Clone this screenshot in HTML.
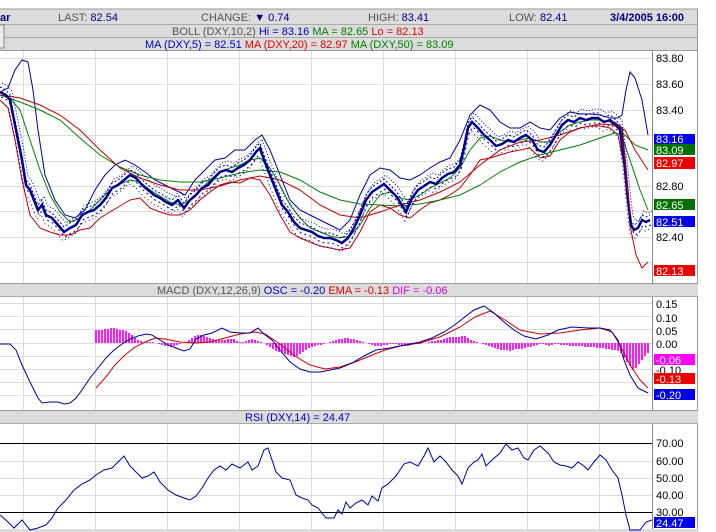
<!DOCTYPE html>
<html><head><meta charset="utf-8"><style>
html,body{margin:0;padding:0;background:#fff;width:716px;height:532px;overflow:hidden;font-family:"Liberation Sans",sans-serif}
svg text{font-family:"Liberation Sans",sans-serif;font-size:11px}
</style></head><body>
<svg width="716" height="532" viewBox="0 0 716 532" xmlns="http://www.w3.org/2000/svg">
<defs>
<path id="pr" d="M0 92 L6 95 L10 100 L14 120 L18 140 L22 160 L26 185 L30 190 L34 200 L38 210 L42 205 L46 215 L52 218 L58 225 L64 232 L70 228 L76 225 L82 215 L88 212 L94 210 L100 205 L106 198 L112 188 L118 185 L124 180 L130 175 L136 178 L142 185 L148 190 L154 195 L160 198 L166 202 L172 205 L178 200 L184 208 L190 200 L196 195 L202 188 L208 185 L214 178 L220 172 L226 170 L232 172 L238 168 L244 165 L250 160 L256 152 L260 148 L264 160 L270 175 L276 190 L282 205 L288 212 L294 222 L300 228 L306 230 L312 232 L318 236 L324 238 L330 238 L336 240 L342 243 L348 238 L354 228 L360 215 L366 200 L372 192 L378 188 L384 184 L390 190 L396 196 L402 205 L406 212 L412 198 L418 190 L424 186 L430 182 L436 184 L442 178 L448 174 L454 172 L460 165 L464 148 L468 128 L472 122 L478 128 L484 135 L490 140 L496 146 L502 144 L508 140 L514 142 L520 138 L526 135 L532 140 L538 150 L544 152 L550 145 L556 135 L562 125 L568 120 L574 122 L580 118 L586 120 L592 118 L598 118 L604 122 L610 120 L616 125 L620 130 L624 160 L628 200 L631 225 L634 230 L638 228 L642 220 L646 222 L650 220"/>
</defs>
<rect width="716" height="532" fill="#fff"/>
<rect x="0" y="9" width="698" height="15" fill="#dcdcdc"/>
<rect x="0" y="24" width="698" height="13" fill="#dcdcdc"/>
<rect x="0" y="37.5" width="698" height="13" fill="#dcdcdc"/>
<line x1="0" y1="9" x2="698" y2="9" fill="none" stroke="#999"/>
<line x1="0" y1="24.5" x2="698" y2="24.5" stroke="#aaa"/>
<line x1="0" y1="37.5" x2="698" y2="37.5" stroke="#aaa"/>
<line x1="0" y1="50.5" x2="698" y2="50.5" stroke="#999"/>
<rect x="-2" y="25" width="6" height="23" fill="#ececec" stroke="#888"/>
<text x="0" y="21" fill="#000080" font-weight="bold" font-size="12">ar</text>
<text x="58" y="21" fill="#555">LAST: <tspan fill="#000080">82.54</tspan></text>
<text x="201" y="21" fill="#555">CHANGE: <tspan fill="#000080">▼ 0.74</tspan></text>
<text x="368" y="21" fill="#555">HIGH: <tspan fill="#000080">83.41</tspan></text>
<text x="509" y="21" fill="#555">LOW: <tspan fill="#000080">82.41</tspan></text>
<text x="610" y="21" fill="#000080" font-weight="bold" font-size="12">3/4/2005 16:00</text>
<text x="172" y="35" fill="#555" font-size="10.5">BOLL (DXY,10,2) <tspan fill="#0000c0">Hi = 83.16</tspan> <tspan fill="#008000">MA = 82.65</tspan> <tspan fill="#e00000">Lo = 82.13</tspan></text>
<text x="145" y="48" fill="#0000c0" font-size="10.5">MA (DXY,5) = 82.51 <tspan fill="#e00000">MA (DXY,20) = 82.97</tspan> <tspan fill="#008000">MA (DXY,50) = 83.09</tspan></text>
<line x1="697.5" y1="9" x2="697.5" y2="532" stroke="#999"/>
<line x1="652.5" y1="51" x2="652.5" y2="283" stroke="#888"/>
<line x1="652.5" y1="296" x2="652.5" y2="410" stroke="#888"/>
<line x1="652.5" y1="423" x2="652.5" y2="530" stroke="#888"/>
<g stroke="#dcdcdc" stroke-width="1">
<path d="M23.5 51V283M95.5 51V283M167.5 51V283M239.5 51V283M311.5 51V283M383.5 51V283M455.5 51V283M527.5 51V283M599.5 51V283"/>
<path d="M23.5 296V410M95.5 296V410M167.5 296V410M239.5 296V410M311.5 296V410M383.5 296V410M455.5 296V410M527.5 296V410M599.5 296V410"/>
<path d="M23.5 423V530M95.5 423V530M167.5 423V530M239.5 423V530M311.5 423V530M383.5 423V530M455.5 423V530M527.5 423V530M599.5 423V530"/>
<path d="M0 58.5H652M0 84.5H652M0 110.5H652M0 135.5H652M0 161.5H652M0 186.5H652M0 211.5H652M0 237.5H652M0 262.5H652"/>
<path d="M0 303.5H652M0 316.5H652M0 329.5H652M0 343.5H652M0 356.5H652M0 369.5H652M0 382.5H652M0 395.5H652"/>
<path d="M0 461.5H652M0 478.5H652M0 495.5H652"/>
</g>
<rect x="0" y="283" width="698" height="13" fill="#dcdcdc"/>
<line x1="0" y1="283.5" x2="698" y2="283.5" stroke="#999"/>
<line x1="0" y1="296.5" x2="698" y2="296.5" stroke="#aaa"/>
<rect x="0" y="410" width="698" height="13" fill="#dcdcdc"/>
<line x1="0" y1="410.5" x2="698" y2="410.5" stroke="#999"/>
<line x1="0" y1="423.5" x2="698" y2="423.5" stroke="#aaa"/>
<rect x="0" y="529" width="698" height="3" fill="#dcdcdc"/>
<text x="157" y="294" fill="#555" font-size="10.5">MACD (DXY,12,26,9) <tspan fill="#0000c0">OSC = -0.20</tspan> <tspan fill="#e00000">EMA = -0.13</tspan> <tspan fill="#e000e0">DIF = -0.06</tspan></text>
<text x="245" y="421" fill="#0000c0" font-size="10.5">RSI (DXY,14) = 24.47</text>
<g fill="#000" font-size="10.5">
<text x="656" y="62">83.80</text><text x="656" y="88">83.60</text><text x="656" y="114">83.40</text>
<text x="656" y="190">82.80</text><text x="656" y="241">82.40</text>
</g>
<rect x="654" y="134" width="41" height="10" fill="#0000ee"/><text x="656" y="143" fill="#fff" font-size="10.5">83.16</text>
<rect x="654" y="144" width="41" height="11" fill="#007000"/><text x="656" y="154" fill="#fff" font-size="10.5">83.09</text>
<rect x="654" y="157" width="41" height="12" fill="#ee0000"/><text x="656" y="167" fill="#fff" font-size="10.5">82.97</text>
<rect x="654" y="199" width="41" height="11" fill="#007000"/><text x="656" y="209" fill="#fff" font-size="10.5">82.65</text>
<rect x="654" y="216" width="41" height="11" fill="#0000ee"/><text x="656" y="226" fill="#fff" font-size="10.5">82.51</text>
<rect x="654" y="265" width="41" height="11" fill="#ee0000"/><text x="656" y="275" fill="#fff" font-size="10.5">82.13</text>
<path fill="none" stroke="#0000a0" d="M0 92 L8 88 L15 70 L22 60 L28 62 L33 90 L38 130 L45 175 L55 200 L65 215 L75 218 L85 210 L95 190 L105 175 L115 165 L125 160 L135 165 L145 172 L155 180 L165 185 L175 190 L185 195 L195 180 L205 170 L215 160 L225 158 L235 150 L245 150 L255 140 L262 135 L270 150 L280 175 L290 200 L300 210 L310 215 L320 220 L330 225 L340 230 L350 220 L360 195 L370 175 L380 168 L390 170 L400 178 L410 180 L420 175 L430 168 L440 162 L450 158 L460 140 L470 115 L480 105 L490 110 L500 122 L510 128 L520 128 L530 122 L540 128 L550 130 L560 118 L570 112 L580 114 L590 114 L600 115 L610 118 L618 118 L622 115 L626 90 L630 72 L635 78 L642 100 L648 135"/>
<path fill="none" stroke="#c00000" d="M0 100 L8 108 L15 140 L22 180 L30 215 L40 228 L50 232 L60 235 L70 235 L80 230 L90 228 L100 218 L110 212 L120 206 L130 200 L140 198 L150 208 L160 212 L170 215 L180 215 L190 210 L200 200 L210 192 L220 185 L230 182 L240 183 L250 178 L260 180 L270 195 L280 215 L290 232 L300 238 L310 242 L320 246 L330 248 L340 250 L350 248 L360 232 L370 212 L380 205 L390 208 L400 215 L410 218 L420 210 L430 203 L440 200 L450 195 L460 188 L470 175 L480 160 L490 158 L500 155 L510 152 L520 150 L530 148 L540 158 L550 156 L560 140 L570 132 L580 128 L590 126 L600 126 L610 128 L618 135 L624 165 L630 225 L636 255 L642 268 L648 262"/>
<path fill="none" stroke="#008000" d="M0 95 L20 102 L40 110 L60 120 L80 138 L100 155 L120 167 L140 175 L160 180 L180 182 L200 182 L220 178 L240 173 L260 170 L280 172 L300 180 L320 192 L340 200 L360 204 L380 205 L400 206 L420 204 L440 200 L460 195 L480 185 L500 172 L520 162 L540 155 L560 150 L580 145 L600 138 L615 133 L625 135 L635 145 L648 150"/>
<path fill="none" stroke="#008000" d="M0 95 L10 98 L20 110 L30 140 L40 170 L50 195 L60 212 L70 222 L80 218 L90 210 L100 200 L110 190 L120 184 L130 180 L140 182 L150 190 L160 196 L170 202 L180 205 L190 200 L200 190 L210 180 L220 172 L230 168 L240 165 L250 160 L260 158 L270 168 L280 185 L290 205 L300 218 L310 228 L320 232 L330 236 L340 238 L350 236 L360 225 L370 208 L380 195 L390 192 L400 198 L410 200 L420 195 L430 188 L440 183 L450 178 L460 168 L470 150 L480 138 L490 136 L500 140 L510 142 L520 140 L530 138 L540 142 L550 142 L560 132 L570 125 L580 122 L590 120 L600 120 L610 122 L620 130 L630 160 L640 190 L648 210"/>
<path fill="none" stroke="#c00000" d="M0 95 L20 98 L40 105 L60 115 L80 130 L100 150 L120 168 L140 178 L160 185 L180 190 L200 190 L220 186 L240 180 L260 176 L280 180 L300 190 L320 205 L340 215 L360 218 L380 212 L400 205 L420 200 L440 192 L460 182 L480 165 L500 150 L520 142 L540 140 L560 135 L580 128 L600 124 L615 125 L625 130 L635 150 L648 170"/>
<g fill="none" stroke="#000090">
<use href="#pr" stroke-width="1" stroke-dasharray="2 2" transform="translate(0,-5)"/>
<use href="#pr" stroke-width="1" stroke-dasharray="2 3" transform="translate(1,5)"/>
<use href="#pr" stroke-width="1" stroke-dasharray="1 2" transform="translate(2,-9)"/>
<use href="#pr" stroke-width="1" stroke-dasharray="1 3" transform="translate(-1,9)"/>
<use href="#pr" stroke-width="2.5"/>
</g>
<path fill="none" stroke="#800040" stroke-width="1.5" d="M614 122 L622 128 L626 170 L630 215"/>
<g fill="#000" font-size="10.5">
<text x="656" y="308">0.15</text><text x="656" y="322">0.10</text><text x="656" y="335">0.05</text><text x="656" y="348">0.00</text><text x="656" y="374">-0.10</text>
</g>
<rect x="654" y="354" width="41" height="11" fill="#ff00ff"/><text x="656" y="364" fill="#fff" font-size="10.5">-0.06</text>
<rect x="654" y="373" width="41" height="11" fill="#ee0000"/><text x="656" y="383" fill="#fff" font-size="10.5">-0.13</text>
<rect x="654" y="389" width="41" height="11" fill="#0000ee"/><text x="656" y="399" fill="#fff" font-size="10.5">-0.20</text>
<path fill="none" stroke="#ff00ff" stroke-width="1.8" d="M96 343V330M99 343V330M102 343V330M105 343V329M108 343V329M111 343V328M114 343V328M117 343V329M120 343V330M123 343V330M126 343V331M129 343V333M132 343V335M135 343V338M138 343V340M141 343V341M144 343V342M147 343V342M150 343V342M153 343V342M156 343V343M159 343V344M162 343V345M165 343V346M168 343V346M171 343V347M174 343V346M177 343V345M180 343V344M183 343V343M186 343V342M189 343V340M192 343V338M195 343V336M198 343V335M201 343V335M204 343V336M207 343V337M210 343V338M213 343V339M216 343V340M219 343V340M222 343V340M225 343V340M228 343V339M231 343V339M234 343V339M237 343V341M240 343V342M243 343V342M246 343V341M249 343V340M252 343V339M255 343V340M258 343V341M261 343V342M264 343V343M267 343V345M270 343V347M273 343V349M276 343V351M279 343V352M282 343V353M285 343V354M288 343V355M291 343V356M294 343V357M297 343V356M300 343V354M303 343V352M306 343V350M309 343V348M312 343V347M315 343V346M318 343V345M321 343V345M324 343V344M327 343V343M330 343V342M333 343V341M336 343V340M339 343V339M342 343V339M345 343V338M348 343V338M351 343V339M354 343V339M357 343V340M360 343V341M363 343V342M366 343V343M369 343V344M372 343V345M375 343V346M378 343V346M381 343V346M384 343V345M387 343V345M390 343V344M393 343V344M396 343V344M399 343V345M402 343V346M405 343V346M408 343V346M411 343V345M414 343V344M417 343V344M420 343V344M423 343V343M426 343V343M429 343V342M432 343V341M435 343V341M438 343V340M441 343V340M444 343V339M447 343V338M450 343V337M453 343V337M456 343V337M459 343V337M462 343V336M465 343V336M468 343V338M471 343V340M474 343V341M477 343V342M480 343V343M483 343V344M486 343V345M489 343V346M492 343V347M495 343V348M498 343V349M501 343V350M504 343V350M507 343V350M510 343V351M513 343V350M516 343V349M519 343V349M522 343V349M525 343V348M528 343V347M531 343V347M534 343V346M537 343V345M540 343V344M543 343V344M546 343V345M549 343V346M552 343V345M555 343V344M558 343V344M561 343V345M564 343V345M567 343V345M570 343V346M573 343V346M576 343V346M579 343V346M582 343V346M585 343V347M588 343V347M591 343V347M594 343V347M597 343V348M600 343V348M603 343V348M606 343V349M609 343V349M612 343V350M615 343V350M618 343V351M621 343V353M624 343V358M627 343V362M630 343V366M633 343V369M636 343V368M639 343V364M642 343V360M645 343V356M648 343V353"/>
<path fill="none" stroke="#cc0000" d="M96 388 L105 378 L115 365 L125 355 L135 347 L145 342 L155 338 L165 339 L180 342 L195 343 L210 342 L225 338 L240 334 L255 332 L265 334 L280 344 L295 356 L310 365 L325 369 L340 367 L355 362 L370 356 L385 350 L400 346 L420 343 L440 337 L460 327 L475 317 L490 311 L505 320 L520 330 L540 334 L560 333 L580 330 L600 328 L612 332 L620 345 L630 365 L640 380 L648 388"/>
<path fill="none" stroke="#0000a0" d="M0 344 L10 344 L16 350 L22 365 L30 382 L38 398 L42 403 L50 402 L58 402 L64 404 L70 403 L76 398 L82 390 L90 378 L98 368 L106 358 L114 350 L122 344 L130 339 L138 336 L146 334 L152 335 L160 340 L168 345 L176 348 L184 351 L190 349 L196 339 L204 335 L212 333 L222 328 L230 332 L240 333 L250 333 L258 328 L264 334 L272 340 L280 350 L290 362 L300 369 L310 372 L320 372 L330 370 L340 368 L352 363 L364 356 L376 350 L390 348 L405 345 L420 342 L432 338 L444 332 L456 324 L466 316 L474 310 L484 306 L494 313 L504 322 L514 330 L524 336 L536 339 L548 335 L558 330 L572 327 L588 328 L600 328 L610 330 L618 340 L624 360 L630 375 L638 388 L648 393"/>
<g fill="#000" font-size="10.5">
<text x="656" y="447">70.00</text><text x="656" y="465">60.00</text><text x="656" y="482">50.00</text><text x="656" y="499">40.00</text><text x="656" y="516">30.00</text>
</g>
<rect x="654" y="517" width="41" height="11" fill="#0000ee"/><text x="656" y="527" fill="#fff" font-size="10.5">24.47</text>
<path stroke="#000" d="M0 443.5H652M0 512.5H652"/>
<path fill="none" stroke="#0000a0" d="M0 515 L8 522 L14 528 L22 520 L30 530 L38 528 L46 525 L52 518 L58 508 L66 500 L74 490 L82 484 L90 480 L96 475 L104 470 L112 468 L118 462 L124 456 L130 466 L136 472 L142 478 L148 476 L154 472 L160 482 L168 490 L176 495 L184 498 L190 500 L196 496 L202 488 L208 478 L214 470 L220 466 L226 470 L232 464 L240 468 L244 465 L248 462 L252 470 L258 466 L264 450 L268 448 L276 472 L282 478 L290 480 L296 495 L302 498 L308 500 L312 505 L318 508 L326 518 L334 518 L338 510 L342 514 L346 502 L350 508 L356 503 L362 500 L368 505 L372 496 L378 501 L382 488 L388 484 L392 480 L396 476 L400 470 L404 464 L410 462 L418 466 L424 456 L428 448 L434 462 L440 456 L446 462 L452 470 L458 476 L462 484 L468 468 L474 462 L478 460 L482 454 L486 466 L492 460 L500 453 L506 444 L512 450 L518 448 L524 458 L528 460 L534 450 L540 446 L548 453 L554 462 L560 465 L566 466 L572 468 L578 462 L584 466 L588 470 L594 462 L600 455 L606 460 L612 470 L618 478 L622 495 L626 515 L630 530 L640 530 L646 522 L652 520"/>
</svg>
</body></html>
